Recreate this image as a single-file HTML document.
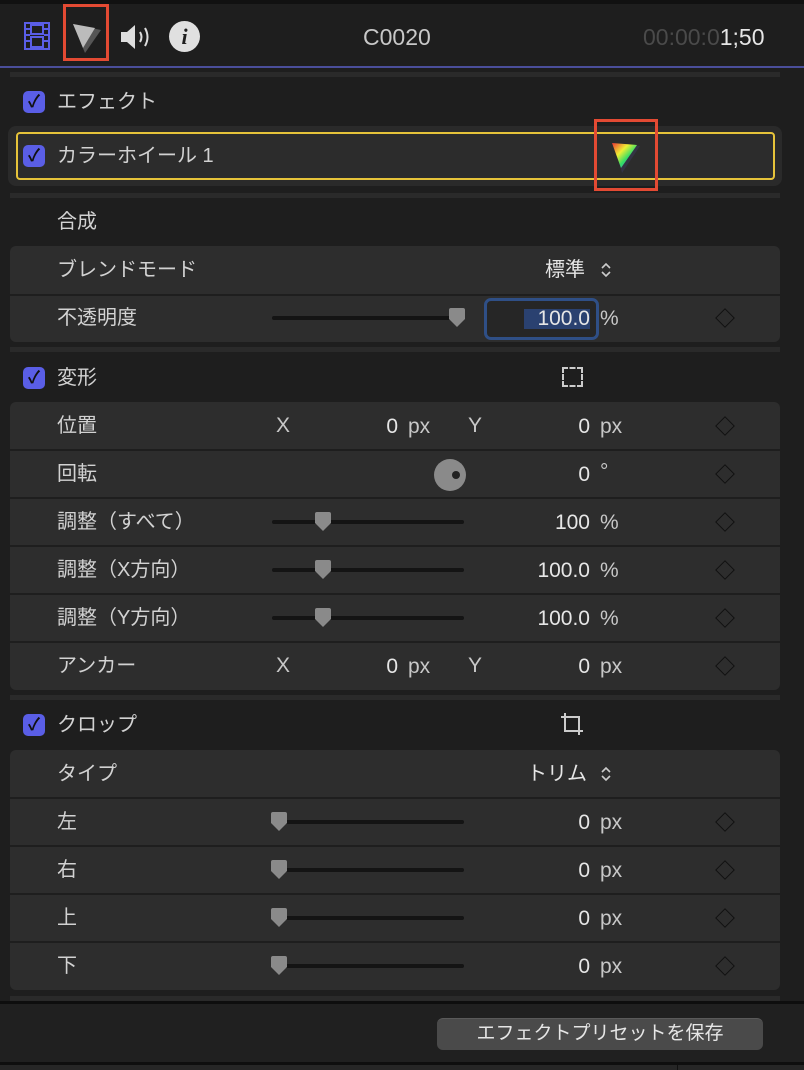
<!DOCTYPE html>
<html><head><meta charset="utf-8"><style>
*{margin:0;padding:0;box-sizing:border-box}
body{width:804px;height:1070px;background:#1e1e1e;font-family:"Liberation Sans","Noto Sans CJK JP",sans-serif;color:#d2d2d2;position:relative;overflow:hidden;font-size:20px}
.a{position:absolute}
.t{position:absolute;transform:translateY(-50%);white-space:nowrap;line-height:24px}
.grp{position:absolute;left:10px;width:770px;background:#2d2d2d;border-radius:6px}
.sep{position:absolute;left:10px;width:770px;height:5px;background:#2a2a2a}
.line{position:absolute;left:10px;width:770px;height:2px;background:#1e1e1e}
.cb{position:absolute;left:23px;width:22px;height:22px;border-radius:5px;background:#5a5ee6;color:#111;font-size:17px;font-weight:bold;text-align:center;line-height:22px}
.track{position:absolute;left:272px;width:192px;height:4px;background:#141414;border-radius:2px}
.dia{position:absolute;left:718px;width:14px;height:14px;border:1.5px solid #111;transform:rotate(45deg)}
.num{position:absolute;transform:translateY(-50%);text-align:right;width:100px;font-size:21px;color:#e6e6e6;line-height:24px}
.u{position:absolute;transform:translateY(-50%);font-size:21px;line-height:24px;color:#c8c8c8}
.thumb{position:absolute;width:18px;height:20px}
</style></head><body>
<!-- header -->
<div class="a" style="left:0;top:0;width:804px;height:4px;background:#111"></div>
<svg class="a" style="left:24px;top:22px" width="26" height="28" viewBox="0 0 26 28"><rect x="1" y="1" width="24" height="26" fill="none" stroke="#5a5ee6" stroke-width="2"/><rect x="7" y="3" width="12" height="9" fill="none" stroke="#5a5ee6" stroke-width="2"/><rect x="7" y="15" width="12" height="10" fill="none" stroke="#5a5ee6" stroke-width="2"/><path d="M1 7H6M1 13H6M1 19H6M20 7H25M20 13H25M20 19H25" stroke="#5a5ee6" stroke-width="2"/></svg>
<div class="a" style="left:63px;top:4px;width:46px;height:57px;border:3px solid #e34a33"></div>
<svg class="a" style="left:71px;top:22px" width="32" height="32" viewBox="0 0 32 32"><path d="M2 2 L30 8 L14 31 Z" fill="#555"/><path d="M2 2 L24 6 L12 26 Z" fill="#bbb"/></svg>
<svg class="a" style="left:120px;top:24px" width="32" height="26" viewBox="0 0 32 26"><path d="M1 8 H7 L15 1 V25 L7 18 H1 Z" fill="#ddd"/><path d="M20 8 Q23 13 20 18" stroke="#ddd" stroke-width="2" fill="none"/><path d="M25 4 Q30 13 25 22" stroke="#ddd" stroke-width="2" fill="none"/></svg>
<div class="a" style="left:169px;top:21px;width:31px;height:31px;border-radius:50%;background:#e0e0e0;color:#1e1e1e;font:italic bold 22px 'Liberation Serif',serif;text-align:center;line-height:31px">i</div>
<div class="t" style="left:363px;top:37px;font-size:23px;color:#c8c8c8">C0020</div>
<div class="t" style="left:643px;top:37px;font-size:23px;color:#4a4a4a">00:00:0<span style="color:#e6e6e6">1;50</span></div>
<div class="a" style="left:0;top:66px;width:804px;height:2px;background:#4a4e9a"></div>
<div class="sep" style="top:72px"></div>
<!-- effect -->
<div class="cb" style="top:91px">✓</div>
<div class="t" style="left:57px;top:102px">エフェクト</div>
<div class="a" style="left:8px;top:126px;width:774px;height:60px;background:#2a2a2a;border-radius:8px"></div>
<div class="a" style="left:16px;top:132px;width:759px;height:48px;border:2px solid #e6c33a;border-radius:4px;background:#2c2c2c"></div>
<div class="cb" style="top:145px">✓</div>
<div class="t" style="left:57px;top:156px">カラーホイール 1</div>
<div class="a" style="left:594px;top:119px;width:64px;height:72px;border:3px solid #e34a33"></div>
<svg class="a" style="left:610px;top:140px" width="32" height="34" viewBox="0 0 32 34"><defs><linearGradient id="g" x1="0" y1="0" x2="1" y2="1"><stop offset="0" stop-color="#e33"/><stop offset=".35" stop-color="#ee3"/><stop offset=".6" stop-color="#3d6"/><stop offset="1" stop-color="#56f"/></linearGradient></defs><path d="M4 4 L30 6 L12 33 Z" fill="#334"/><path d="M2 3 L27 5 L11 28 Z" fill="url(#g)"/></svg>
<div class="sep" style="top:193px"></div>
<!-- 合成 -->
<div class="t" style="left:57px;top:222px">合成</div>
<div class="grp" style="top:246px;height:96px"></div>
<div class="line" style="top:294px"></div>
<div class="t" style="left:57px;top:270px">ブレンドモード</div>
<div class="t" style="left:545px;top:270px;color:#e6e6e6">標準</div>
<svg class="a" style="left:600px;top:261px" width="12" height="18"><path d="M2 7 L6 3 L10 7 M2 11 L6 15 L10 11" stroke="#ccc" stroke-width="1.6" fill="none"/></svg>
<div class="t" style="left:57px;top:318px">不透明度</div>
<div class="track" style="top:316px;width:186px"></div>
<svg class="thumb" style="left:448px;top:308px" viewBox="0 0 18 20"><path d="M1 2 Q1 0 3 0 H15 Q17 0 17 2 V11 L9 19 L1 11 Z" fill="#8a8a8a"/></svg>
<div class="a" style="left:484px;top:298px;width:115px;height:42px;border:3px solid #2f4f86;border-radius:7px;background:#262626"></div>
<div class="a" style="left:524px;top:309px;width:66px;height:20px;background:#2a4170"></div>
<div class="num" style="left:490px;top:319px">100.0</div>
<div class="u" style="left:600px;top:319px">%</div>
<div class="dia" style="top:311px"></div>
<div class="sep" style="top:347px"></div>
<!-- 変形 -->
<div class="cb" style="top:367px">✓</div>
<div class="t" style="left:57px;top:378px">変形</div>
<div class="a" style="left:562px;top:367px;width:21px;height:20px;border:2px dashed #ccc"></div>
<div class="grp" style="top:402px;height:288px"></div>
<div class="line" style="top:449px"></div><div class="line" style="top:497px"></div><div class="line" style="top:545px"></div><div class="line" style="top:593px"></div><div class="line" style="top:641px"></div>
<div class="t" style="left:57px;top:426px">位置</div>
<div class="u" style="left:276px;top:426px">X</div><div class="num" style="left:298px;top:427px">0</div><div class="u" style="left:408px;top:427px">px</div>
<div class="u" style="left:468px;top:426px">Y</div><div class="num" style="left:490px;top:427px">0</div><div class="u" style="left:600px;top:427px">px</div>
<div class="dia" style="top:419px"></div>
<div class="t" style="left:57px;top:474px">回転</div>
<svg class="a" style="left:433px;top:458px" width="34" height="34"><circle cx="17" cy="17" r="16" fill="#8a8a8a"/><circle cx="23" cy="17" r="4" fill="#222"/></svg>
<div class="num" style="left:490px;top:475px">0</div><div class="u" style="left:600px;top:472px">°</div>
<div class="dia" style="top:467px"></div>
<div class="t" style="left:57px;top:522px">調整（すべて）</div>
<div class="track" style="top:520px"></div>
<svg class="thumb" style="left:314px;top:512px" viewBox="0 0 18 20"><path d="M1 2 Q1 0 3 0 H15 Q17 0 17 2 V11 L9 19 L1 11 Z" fill="#8a8a8a"/></svg>
<div class="num" style="left:490px;top:523px">100</div><div class="u" style="left:600px;top:523px">%</div>
<div class="dia" style="top:515px"></div>
<div class="t" style="left:57px;top:570px">調整（X方向）</div>
<div class="track" style="top:568px"></div>
<svg class="thumb" style="left:314px;top:560px" viewBox="0 0 18 20"><path d="M1 2 Q1 0 3 0 H15 Q17 0 17 2 V11 L9 19 L1 11 Z" fill="#8a8a8a"/></svg>
<div class="num" style="left:490px;top:571px">100.0</div><div class="u" style="left:600px;top:571px">%</div>
<div class="dia" style="top:563px"></div>
<div class="t" style="left:57px;top:618px">調整（Y方向）</div>
<div class="track" style="top:616px"></div>
<svg class="thumb" style="left:314px;top:608px" viewBox="0 0 18 20"><path d="M1 2 Q1 0 3 0 H15 Q17 0 17 2 V11 L9 19 L1 11 Z" fill="#8a8a8a"/></svg>
<div class="num" style="left:490px;top:619px">100.0</div><div class="u" style="left:600px;top:619px">%</div>
<div class="dia" style="top:611px"></div>
<div class="t" style="left:57px;top:666px">アンカー</div>
<div class="u" style="left:276px;top:666px">X</div><div class="num" style="left:298px;top:667px">0</div><div class="u" style="left:408px;top:667px">px</div>
<div class="u" style="left:468px;top:666px">Y</div><div class="num" style="left:490px;top:667px">0</div><div class="u" style="left:600px;top:667px">px</div>
<div class="dia" style="top:659px"></div>
<div class="sep" style="top:695px"></div>
<!-- クロップ -->
<div class="cb" style="top:714px">✓</div>
<div class="t" style="left:57px;top:725px">クロップ</div>
<svg class="a" style="left:559px;top:711px" width="26" height="26"><path d="M6 2 V20 H24" stroke="#ccc" stroke-width="2" fill="none"/><path d="M2 6 H20 V24" stroke="#ccc" stroke-width="2" fill="none"/></svg>
<div class="grp" style="top:750px;height:240px"></div>
<div class="line" style="top:797px"></div><div class="line" style="top:845px"></div><div class="line" style="top:893px"></div><div class="line" style="top:941px"></div>
<div class="t" style="left:57px;top:774px">タイプ</div>
<div class="t" style="left:527px;top:774px;color:#e6e6e6">トリム</div>
<svg class="a" style="left:600px;top:765px" width="12" height="18"><path d="M2 7 L6 3 L10 7 M2 11 L6 15 L10 11" stroke="#ccc" stroke-width="1.6" fill="none"/></svg>
<div class="t" style="left:57px;top:822px">左</div>
<div class="track" style="top:820px"></div>
<svg class="thumb" style="left:270px;top:812px" viewBox="0 0 18 20"><path d="M1 2 Q1 0 3 0 H15 Q17 0 17 2 V11 L9 19 L1 11 Z" fill="#8a8a8a"/></svg>
<div class="num" style="left:490px;top:823px">0</div><div class="u" style="left:600px;top:823px">px</div><div class="dia" style="top:815px"></div>
<div class="t" style="left:57px;top:870px">右</div>
<div class="track" style="top:868px"></div>
<svg class="thumb" style="left:270px;top:860px" viewBox="0 0 18 20"><path d="M1 2 Q1 0 3 0 H15 Q17 0 17 2 V11 L9 19 L1 11 Z" fill="#8a8a8a"/></svg>
<div class="num" style="left:490px;top:871px">0</div><div class="u" style="left:600px;top:871px">px</div><div class="dia" style="top:863px"></div>
<div class="t" style="left:57px;top:918px">上</div>
<div class="track" style="top:916px"></div>
<svg class="thumb" style="left:270px;top:908px" viewBox="0 0 18 20"><path d="M1 2 Q1 0 3 0 H15 Q17 0 17 2 V11 L9 19 L1 11 Z" fill="#8a8a8a"/></svg>
<div class="num" style="left:490px;top:919px">0</div><div class="u" style="left:600px;top:919px">px</div><div class="dia" style="top:911px"></div>
<div class="t" style="left:57px;top:966px">下</div>
<div class="track" style="top:964px"></div>
<svg class="thumb" style="left:270px;top:956px" viewBox="0 0 18 20"><path d="M1 2 Q1 0 3 0 H15 Q17 0 17 2 V11 L9 19 L1 11 Z" fill="#8a8a8a"/></svg>
<div class="num" style="left:490px;top:967px">0</div><div class="u" style="left:600px;top:967px">px</div><div class="dia" style="top:959px"></div>
<div class="sep" style="top:996px"></div>
<!-- footer -->
<div class="a" style="left:0;top:1001px;width:804px;height:3px;background:#0e0e0e"></div>
<div class="a" style="left:0;top:1004px;width:804px;height:58px;background:#202020"></div>
<div class="a" style="left:437px;top:1018px;width:326px;height:32px;background:#4a4a4a;border-radius:6px;border-top:1px solid #5a5a5a"></div>
<div class="t" style="left:437px;width:326px;text-align:center;top:1034px;color:#e6e6e6;font-size:19px">エフェクトプリセットを保存</div>
<div class="a" style="left:0;top:1062px;width:804px;height:3px;background:#0e0e0e"></div>
<div class="a" style="left:0;top:1065px;width:804px;height:5px;background:#262626"></div>
<div class="a" style="left:677px;top:1065px;width:1px;height:5px;background:#111"></div>
</body></html>
